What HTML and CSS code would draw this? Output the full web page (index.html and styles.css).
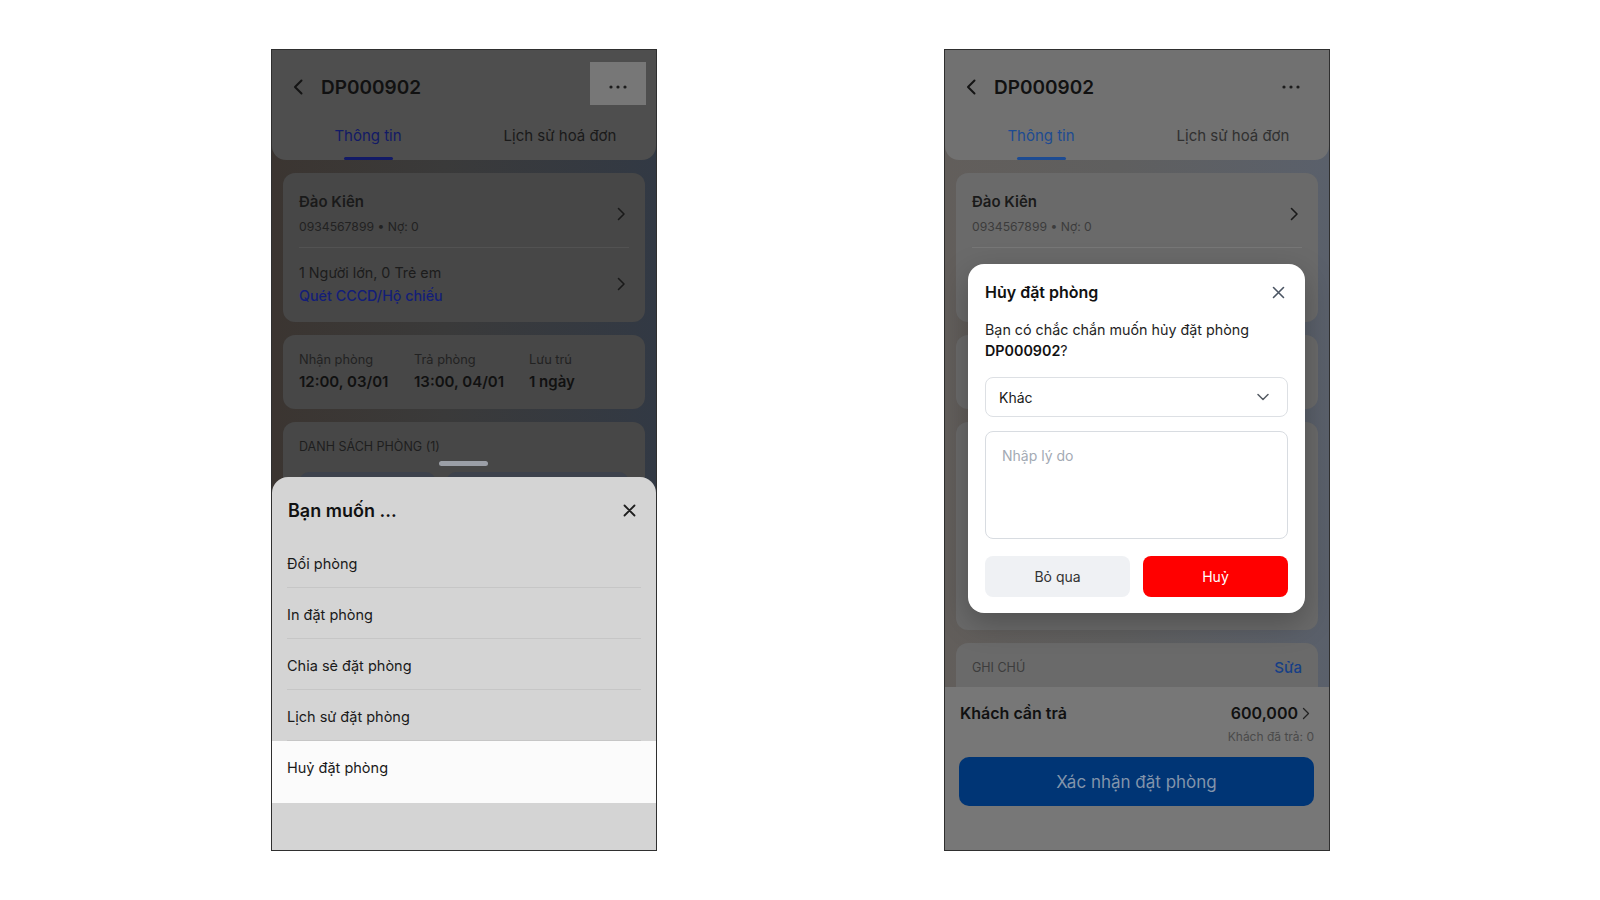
FILE: index.html
```html
<!DOCTYPE html>
<html lang="vi">
<head>
<meta charset="UTF-8">
<meta name="viewport" content="width=device-width, initial-scale=1.0">
<title>Đặt phòng DP000902</title>
<link rel="stylesheet" href="styles.css">
</head>
<body>
<div class="stage">

  <!-- action sheet state -->
  <div class="phone phone--sheet">
    <header class="app-header">
      <div class="topbar">
        <svg class="back" width="10" height="16" viewBox="0 0 10 16"><path d="M8.5 1.5 2 8l6.5 6.5" fill="none" stroke="currentColor" stroke-width="2" stroke-linecap="round" stroke-linejoin="round"/></svg>
        <h1 class="title">DP000902</h1>
        <button class="more is-pressed">
          <svg width="18" height="4" viewBox="0 0 18 4"><circle cx="2" cy="2" r="1.6"/><circle cx="9" cy="2" r="1.6"/><circle cx="16" cy="2" r="1.6"/></svg>
        </button>
      </div>
      <nav class="tabs">
        <span class="tab tab--active">Thông tin</span>
        <span class="tab">Lịch sử hoá đơn</span>
      </nav>
    </header>

    <main class="content">
      <section class="card">
        <div class="card-row card-row--guest">
          <div>
            <div class="guest-name">Đào Kiên</div>
            <div class="guest-meta">0934567899 • Nợ: 0</div>
          </div>
          <svg class="chev" width="9" height="14" viewBox="0 0 9 14"><path d="M1.5 1.5 7 7l-5.5 5.5" fill="none" stroke="currentColor" stroke-width="1.6" stroke-linecap="round" stroke-linejoin="round"/></svg>
        </div>
        <div class="card-row card-row--people">
          <div>
            <div class="people">1 Người lớn, 0 Trẻ em</div>
            <div class="link">Quét CCCD/Hộ chiếu</div>
          </div>
          <svg class="chev" width="9" height="14" viewBox="0 0 9 14"><path d="M1.5 1.5 7 7l-5.5 5.5" fill="none" stroke="currentColor" stroke-width="1.6" stroke-linecap="round" stroke-linejoin="round"/></svg>
        </div>
      </section>

      <section class="card stay">
        <div><div class="label">Nhận phòng</div><div class="value">12:00, 03/01</div></div>
        <div><div class="label">Trả phòng</div><div class="value">13:00, 04/01</div></div>
        <div><div class="label">Lưu trú</div><div class="value">1 ngày</div></div>
      </section>

      <section class="card rooms">
        <div class="section-label">DANH SÁCH PHÒNG (1)</div>
        <div class="room-tiles"><div class="room-tile"></div><div class="room-tile"></div></div>
      </section>
    </main>

    <div class="sheet">
      <span class="sheet-handle"></span>
      <div class="sheet-head">
        <h2>Bạn muốn ...</h2>
        <svg class="close" width="13" height="13" viewBox="0 0 13 13"><path d="M1.5 1.5l10 10M11.5 1.5l-10 10" fill="none" stroke="currentColor" stroke-width="1.8" stroke-linecap="round"/></svg>
      </div>
      <ul class="sheet-list">
        <li>Đổi phòng</li>
        <li>In đặt phòng</li>
        <li>Chia sẻ đặt phòng</li>
        <li>Lịch sử đặt phòng</li>
        <li class="is-active">Huỷ đặt phòng</li>
      </ul>
    </div>
  </div>

  <!-- cancel dialog state -->
  <div class="phone phone--modal">
    <header class="app-header">
      <div class="topbar">
        <svg class="back" width="10" height="16" viewBox="0 0 10 16"><path d="M8.5 1.5 2 8l6.5 6.5" fill="none" stroke="currentColor" stroke-width="2" stroke-linecap="round" stroke-linejoin="round"/></svg>
        <h1 class="title">DP000902</h1>
        <button class="more">
          <svg width="18" height="4" viewBox="0 0 18 4"><circle cx="2" cy="2" r="1.6"/><circle cx="9" cy="2" r="1.6"/><circle cx="16" cy="2" r="1.6"/></svg>
        </button>
      </div>
      <nav class="tabs">
        <span class="tab tab--active">Thông tin</span>
        <span class="tab">Lịch sử hoá đơn</span>
      </nav>
    </header>

    <main class="content">
      <section class="card">
        <div class="card-row card-row--guest">
          <div>
            <div class="guest-name">Đào Kiên</div>
            <div class="guest-meta">0934567899 • Nợ: 0</div>
          </div>
          <svg class="chev" width="9" height="14" viewBox="0 0 9 14"><path d="M1.5 1.5 7 7l-5.5 5.5" fill="none" stroke="currentColor" stroke-width="1.6" stroke-linecap="round" stroke-linejoin="round"/></svg>
        </div>
        <!-- lower row sits under the dialog -->
        <div class="card-row card-row--blank"></div>
      </section>

      <section class="card stay stay--blank"></section>

      <section class="card rooms"></section>

      <section class="card note">
        <span class="section-label">GHI CHÚ</span>
        <span class="edit">Sửa</span>
      </section>
    </main>

    <footer class="pay-bar">
      <div class="pay-row">
        <span>Khách cần trả</span>
        <span class="amount">600,000
          <svg width="8" height="13" viewBox="0 0 8 13"><path d="M1.5 1.5 6.5 6.5l-5 5" fill="none" stroke="currentColor" stroke-width="1.3" stroke-linecap="round" stroke-linejoin="round"/></svg>
        </span>
      </div>
      <div class="paid">Khách đã trả: 0</div>
      <button class="confirm">Xác nhận đặt phòng</button>
    </footer>

    <div class="dialog">
      <div class="dialog-head">
        <h2>Hủy đặt phòng</h2>
        <svg class="close" width="13" height="13" viewBox="0 0 13 13"><path d="M1.5 1.5l10 10M11.5 1.5l-10 10" fill="none" stroke="currentColor" stroke-width="1.6" stroke-linecap="round"/></svg>
      </div>
      <p class="dialog-text">Bạn có chắc chắn muốn hủy đặt phòng <b>DP000902</b>?</p>
      <div class="select">
        <span>Khác</span>
        <svg width="12" height="8" viewBox="0 0 12 8"><path d="M1 1.5l5 5 5-5" fill="none" stroke="currentColor" stroke-width="1.5" stroke-linecap="round" stroke-linejoin="round"/></svg>
      </div>
      <div class="reason">Nhập lý do</div>
      <div class="dialog-actions">
        <button class="btn btn--ghost">Bỏ qua</button>
        <button class="btn btn--danger">Huỷ</button>
      </div>
    </div>
  </div>

</div>
</body>
</html>
```

FILE: styles.css
```css
* {
  box-sizing: border-box;
}

body {
  margin: 0;
  background-color: #fff;
  font-family: Inter, 'Noto Sans', sans-serif;
  color: #111;
}

h1, h2, p, ul {
  margin: 0;
  padding: 0;
}

button {
  font-family: inherit;
  border: none;
  padding: 0;
  cursor: pointer;
}

.stage {
  display: flex;
  gap: 287px;
  padding: 49px 0 0 271px;
}

/* phone frame; colours are the app seen through the dim overlay */
.phone {
  position: relative;
  width: 386px;
  height: 802px;
  overflow: hidden;
  border: 1px solid #2f2f2f;
}

.phone--sheet {
  --header: #4e4e4e;
  --card: #474747;
  --line: #525252;
  --muted: #222;
  --accent: #121a66;
  --link: #131e78;
  --tile: #3d424c;
  background: linear-gradient(90deg, #3b3531 0%, #3a3a3a 45%, #323944 100%);
}

.phone--modal {
  --header: #717171;
  --card: #6a6a6a;
  --line: #777;
  --muted: #3c3c3c;
  --accent: #1d4b92;
  --link: #163f86;
  --tile: #646870;
  background: linear-gradient(90deg, #625e5b 0%, #5f5f5f 45%, #5a606b 100%);
}

.app-header {
  height: 110px;
  background-color: var(--header);
  border-radius: 0 0 14px 14px;
}

.topbar {
  display: flex;
  align-items: center;
  height: 74px;
  padding: 0 10px 0 21px;
}

.back {
  color: #141414;
}

.title {
  margin-left: 18px;
  font-size: 19px;
  font-weight: 600;
  flex: 1;
}

.more {
  display: flex;
  align-items: center;
  justify-content: center;
  align-self: flex-start;
  width: 56px;
  height: 43px;
  margin-top: 12px;
  padding-top: 6px;
  background: transparent;
  fill: #1c1c1c;
}

.more.is-pressed {
  background-color: #777;
}

.tabs {
  display: flex;
  height: 36px;
}

.tab {
  flex: 1;
  display: flex;
  flex-direction: column;
  align-items: center;
  padding-top: 2px;
  font-size: 15px;
  line-height: 20px;
  color: #1a1a1a;
}

.phone--modal .tab {
  color: #303030;
}

.tab--active,
.phone--modal .tab--active {
  color: var(--accent);
}

.tab--active::after {
  content: "";
  width: 49px;
  height: 3px;
  margin-top: auto;
  border-radius: 2px;
  background-color: var(--accent);
}

.content {
  display: flex;
  flex-direction: column;
  gap: 13px;
  padding: 13px 11px 0;
}

.card {
  background-color: var(--card);
  border-radius: 12px;
  padding: 0 16px;
}

.card-row {
  display: flex;
  align-items: center;
  justify-content: space-between;
  padding-right: 3px;
  color: #1a1a1a;
}

.card-row--guest {
  padding-top: 19px;
  padding-bottom: 11px;
  border-bottom: 1px solid var(--line);
}

.card-row--people {
  padding-top: 13px;
  padding-bottom: 15px;
}

.card-row--blank {
  height: 74px;
}

.guest-name {
  font-size: 15px;
  font-weight: 600;
  line-height: 20px;
}

.guest-meta {
  margin-top: 6px;
  font-size: 12.2px;
  line-height: 18px;
  color: var(--muted);
}

.people,
.link {
  font-size: 14.3px;
  line-height: 23px;
}

.people {
  color: #1c1c1c;
}

.link {
  color: var(--link);
  font-weight: 500;
}

.stay {
  display: grid;
  grid-template-columns: 115px 115px 1fr;
  padding-top: 14px;
  padding-bottom: 16px;
}

.stay--blank {
  height: 74px;
}

.label {
  font-size: 12.8px;
  line-height: 22px;
  color: var(--muted);
}

.value {
  font-size: 15px;
  font-weight: 600;
  line-height: 22px;
}

.rooms {
  height: 208px;
  padding-top: 14px;
}

.section-label {
  font-size: 12.5px;
  line-height: 22px;
  color: #1e1e1e;
}

.phone--modal .section-label {
  color: var(--muted);
}

.room-tiles {
  display: grid;
  grid-template-columns: 137px 1fr;
  gap: 10px;
  margin-top: 14px;
}

.room-tile {
  height: 120px;
  border-radius: 10px;
  background-color: var(--tile);
}

.note {
  display: flex;
  justify-content: space-between;
  height: 80px;
  padding-top: 14px;
}

.edit {
  font-size: 15px;
  font-weight: 500;
  line-height: 22px;
  color: var(--link);
}

/* fixed footer */
.pay-bar {
  position: absolute;
  left: 0;
  right: 0;
  bottom: 0;
  height: 163px;
  padding: 14px 15px 0 14px;
  background-color: #777;
}

.pay-row {
  display: flex;
  justify-content: space-between;
  padding-left: 1px;
  font-size: 16px;
  font-weight: 600;
  line-height: 24px;
}

.amount {
  display: flex;
  align-items: center;
  gap: 4px;
  padding-right: 4px;
  color: #111;
}

.amount svg {
  color: #222;
}

.paid {
  margin-top: 4px;
  text-align: right;
  font-size: 12px;
  line-height: 16px;
  color: #4a4a4a;
}

.confirm {
  display: block;
  width: 100%;
  height: 49px;
  margin-top: 12px;
  border-radius: 10px;
  background-color: #003575;
  color: #8294ab;
  font-size: 17px;
}

/* bottom action sheet */
.sheet {
  position: absolute;
  left: 0;
  right: 0;
  top: 427px;
  bottom: 0;
  background-color: #d4d4d4;
  border-radius: 16px 16px 0 0;
}

.sheet-handle {
  position: absolute;
  top: -16px;
  left: 167px;
  width: 49px;
  height: 5px;
  border-radius: 3px;
  background-color: #9b9fa7;
}

.sheet-head {
  display: flex;
  justify-content: space-between;
  align-items: center;
  height: 60px;
  padding: 6px 20px 0 16px;
}

.sheet-head h2 {
  font-size: 18px;
  font-weight: 600;
}

.close {
  color: #1e1e1e;
}

.sheet-list {
  list-style: none;
  padding: 0 15px;
}

.sheet-list li {
  height: 51px;
  padding-top: 4px;
  line-height: 46px;
  font-size: 14.5px;
  color: #1a1a1a;
  border-bottom: 1px solid #c6c6c6;
}

.sheet-list li.is-active {
  height: 62px;
  margin: 0 -15px;
  padding-left: 15px;
  border-bottom: none;
  background-color: #fbfbfb;
}

/* cancel dialog */
.dialog {
  position: absolute;
  left: 23px;
  top: 214px;
  width: 337px;
  padding: 17px 17px 16px;
  background-color: #fff;
  border-radius: 16px;
  box-shadow: 0 10px 30px rgba(0, 0, 0, 0.25);
}

.dialog-head {
  display: flex;
  justify-content: space-between;
  align-items: center;
  height: 22px;
}

.dialog-head h2 {
  font-size: 16px;
  font-weight: 600;
}

.dialog-head .close {
  margin-right: 3px;
  color: #4b5563;
}

.dialog-text {
  margin-top: 16px;
  font-size: 14.3px;
  line-height: 21px;
  color: #1f1f1f;
}

.dialog-text b {
  font-weight: 600;
  color: #111;
}

.select {
  display: flex;
  justify-content: space-between;
  align-items: center;
  height: 40px;
  margin-top: 16px;
  padding: 0 18px 0 13px;
  border: 1px solid #dde0e4;
  border-radius: 8px;
  font-size: 14px;
  color: #1a1a1a;
}

.select svg {
  color: #555b63;
}

.reason {
  height: 108px;
  margin-top: 14px;
  padding: 14px 16px;
  border: 1px solid #d8dce1;
  border-radius: 8px;
  font-size: 14px;
  line-height: 20px;
  color: #a3aab4;
}

.dialog-actions {
  display: grid;
  grid-template-columns: 1fr 1fr;
  gap: 13px;
  margin-top: 17px;
}

.btn {
  height: 41px;
  border-radius: 8px;
  font-size: 14px;
}

.btn--ghost {
  background-color: #eff1f4;
  color: #333;
}

.btn--danger {
  background-color: #ff0000;
  color: #fff;
}
```
